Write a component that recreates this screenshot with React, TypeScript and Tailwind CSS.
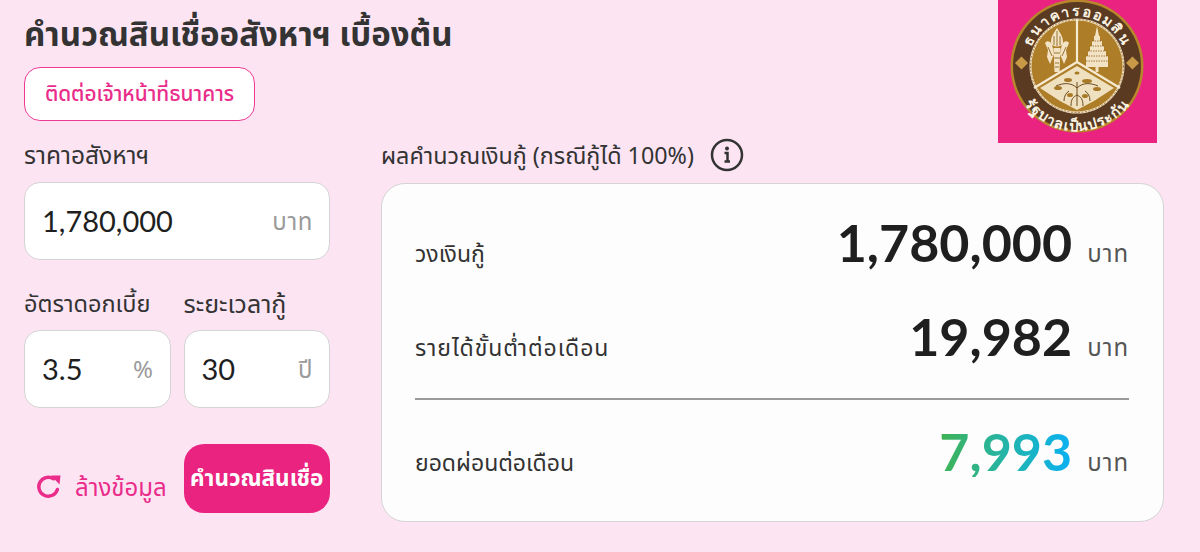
import React from 'react';

const numberFont = { fontFamily: 'Lato, "Noto Sans", sans-serif' };

function BankLogo() {
  return (
    <svg viewBox="0 0 159 143" className="w-full h-full block">
      <rect width="159" height="143" fill="#e9237f" />
      <circle cx="79" cy="66" r="66.5" fill="#b8862c" />
      <circle cx="79" cy="66" r="64" fill="#5a3b22" />
      <circle cx="79" cy="66" r="47.5" fill="#f3e3c4" />
      <circle cx="79" cy="66" r="45.5" fill="#ad7d27" />
      <circle cx="79" cy="66" r="46.5" fill="none" stroke="#8f6a2e" strokeWidth="0.8" strokeDasharray="2 1.5" />
      {/* three way split */}
      <path d="M79 19V62M79 62L36 88M79 62L122 88" stroke="#f6ead2" strokeWidth="2.2" fill="none" />
      {/* tree panel */}
      <path d="M79 66L42 88L62 101L79 110L96 101L116 88Z" fill="#efe0bf" />
      <g fill="#a87a28">
        <ellipse cx="70" cy="80" rx="4" ry="2" />
        <ellipse cx="89" cy="81" rx="5" ry="2" />
        <ellipse cx="60" cy="88" rx="4" ry="2" />
        <ellipse cx="99" cy="89" rx="4" ry="2" />
        <ellipse cx="72" cy="95" rx="3" ry="2" />
        <ellipse cx="87" cy="96" rx="3" ry="2" />
        <ellipse cx="79" cy="73" rx="2.500" ry="1.500" />
      </g>
      <g fill="none" stroke="#6d4c1d" strokeWidth="1">
        <path d="M79 106V82M79 88C73 82 65 83 58 86M79 88C85 82 93 83 100 86M73 106C73 99 75 97 79 95C83 97 85 99 85 106M66 101C66 96 68 93 71 91M92 101C92 96 90 93 87 91" />
      </g>
      {/* deity */}
      <g fill="#f3e3c4">
        <path d="M59 28C56 33 53 36 53 42C53 48 65 48 65 42C65 36 62 33 59 28Z" />
        <path d="M47 43C49 40 52 41 54 44L56 54L52 64L49 57L50 50ZM71 43C69 40 66 41 64 44L62 54L66 64L69 57L68 50Z" />
        <path d="M55.500 48H62.500L61.500 72H56.500Z" />
      </g>
      <g stroke="#8d6420" strokeWidth="0.9" fill="none">
        <path d="M59 31V46M56 36V45M62 36V45M56 53H62M56 58H62M57 63H61M57 67H61M50 47L54 56M68 47L64 56" />
      </g>
      {/* pagoda */}
      <g fill="#f3e3c4">
        <path d="M99 26L101 36H97Z" />
        <rect x="96" y="36" width="6" height="5" />
        <rect x="94" y="41" width="10" height="5" />
        <rect x="92" y="46" width="14" height="5" />
        <rect x="90" y="51" width="18" height="5" />
        <rect x="88" y="56" width="22" height="11" />
        <rect x="97.500" y="67" width="3" height="5" />
      </g>
      <g stroke="#8d6420" strokeWidth="0.8" strokeDasharray="1.5 1">
        <path d="M94 41H104M92 46H106M90 51H108M88 56H110M88 61H110" />
      </g>
      <path d="M17 63L23.500 56.500L30 63L23.500 69.500Z" fill="#c89a48" />
      <path d="M128 63L134.500 56.500L141 63L134.500 69.500Z" fill="#c89a48" />
      <defs>
        <path id="logoTop" d="M30 72.500A49.500 49.500 0 1 1 128 72.500" />
        <path id="logoBottom" d="M15.500 80A65 65 0 0 0 142.500 80" />
      </defs>
      <text fill="#fbf3e2" fontSize="14" fontWeight="700" letterSpacing="2" style={{ fontFamily: '"Noto Sans", sans-serif' }}>
        <textPath href="#logoTop" startOffset="50%" textAnchor="middle">ธนาคารออมสิน</textPath>
      </text>
      <text fill="#fbf3e2" fontSize="14.500" fontWeight="700" letterSpacing="1" style={{ fontFamily: '"Noto Sans", sans-serif' }}>
        <textPath href="#logoBottom" startOffset="50%" textAnchor="middle">รัฐบาลเป็นประกัน</textPath>
      </text>
    </svg>
  );
}

function ResetIcon() {
  return (
    <svg width="28" height="28" viewBox="0 0 28 28" fill="none">
      <path d="M22.400 16.500A9.500 9.500 0 1 1 18.500 5.800" stroke="#ea2c8a" strokeWidth="3.400" strokeLinecap="round" />
      <path d="M16 2.500L25.500 2.500L24.500 11.500Z" fill="#ea2c8a" />
    </svg>
  );
}

function InfoIcon() {
  return (
    <svg width="34" height="34" viewBox="0 0 34 34" fill="none">
      <circle cx="17" cy="17" r="15" stroke="#333333" strokeWidth="2.500" />
      <circle cx="17" cy="10.500" r="2" fill="#333333" />
      <path d="M14.500 15H17.500V23M14.500 23.500H20" stroke="#333333" strokeWidth="2.500" />
    </svg>
  );
}

function InputBox({ value, unit, className }: { value: string; unit: string; className?: string }) {
  return (
    <div className={`h-[78px] bg-white border border-[#d4d4d4] rounded-[16px] flex items-center justify-between pl-[17px] pr-[16px] ${className ?? ''}`}>
      <span className="text-[29px] text-[#1f1f1f]" style={numberFont}>{value}</span>
      <span className="text-[24px] tracking-[0.6px] text-[#9a9a9a]">{unit}</span>
    </div>
  );
}

function ResultRow({ label, value, gradient, className, labelClass }: { label: string; value: string; gradient?: boolean; className?: string; labelClass?: string }) {
  return (
    <div className={`flex items-baseline justify-between ${className ?? ''}`}>
      <span className={`text-[23px] leading-none text-[#333333] ${labelClass ?? ''}`}>{label}</span>
      <div className="flex items-baseline gap-[15px]">
        <span
          style={numberFont}
          className={
            gradient
              ? 'text-[52px] leading-none font-bold bg-gradient-to-r from-[#3fb24f] to-[#0cb0f2] bg-clip-text text-transparent'
              : 'text-[52px] leading-none font-bold text-[#1f1f1f]'
          }
        >
          {value}
        </span>
        <span className="text-[24px] leading-none tracking-[1px] text-[#555555]">บาท</span>
      </div>
    </div>
  );
}

export default function App() {
  return (
    <div
      className="relative w-[1200px] h-[552px] bg-[#fce4f3] overflow-hidden pl-[24px]"
      style={{ fontFamily: '"Noto Sans", "Noto Sans Thai", sans-serif' }}
    >
      <div className="absolute top-0 left-[998px] w-[159px] h-[143px]">
        <BankLogo />
      </div>

      <h1 className="text-[33px] leading-[40px] font-bold text-[#333333] pt-[14px]">คำนวณสินเชื่ออสังหาฯ เบื้องต้น</h1>
      <button className="mt-[13px] w-[231px] h-[54px] bg-white border border-[#ee3a94] rounded-[16px] text-[#ea2c8a] text-[20.800px] font-medium">
        ติดต่อเจ้าหน้าที่ธนาคาร
      </button>

      <div className="flex gap-[51px] mt-[12px]">
        <div className="w-[306px]">
          <div className="text-[24.500px] leading-[44px] text-[#333333]">ราคาอสังหาฯ</div>
          <InputBox value="1,780,000" unit="บาท" className="mt-[5px]" />
          <div className="grid grid-cols-2 gap-[13px] mt-[21px]">
            <div>
              <div className="text-[23.500px] leading-[44px] text-[#333333] whitespace-nowrap">อัตราดอกเบี้ย</div>
              <InputBox value="3.5" unit="%" className="mt-[5px]" />
            </div>
            <div>
              <div className="text-[25px] leading-[44px] text-[#333333] whitespace-nowrap">ระยะเวลากู้</div>
              <InputBox value="30" unit="ปี" className="mt-[5px]" />
            </div>
          </div>
          <div className="grid grid-cols-2 gap-[13px] mt-[36px]">
            <div className="flex items-center gap-[12px] pl-[11px] text-[#ea2c8a] text-[24px] pt-[16px] whitespace-nowrap">
              <ResetIcon />
              <span>ล้างข้อมูล</span>
            </div>
            <button className="h-[69px] bg-[#e9237f] rounded-[20px] text-white text-[22.500px] font-bold whitespace-nowrap pb-[2px]">
              คำนวณสินเชื่อ
            </button>
          </div>
        </div>

        <div className="w-[783px]">
          <div className="flex items-center gap-[16px] h-[44px]">
            <span className="text-[23.300px] text-[#333333] whitespace-nowrap">ผลคำนวณเงินกู้ (กรณีกู้ได้ 100%)</span>
            <InfoIcon />
          </div>
          <div className="mt-[6px] h-[339px] bg-[#fdfdfd] border border-[#d4d4d4] rounded-[24px] pl-[33px] pr-[34px] pt-[32px]">
            <ResultRow label="วงเงินกู้" value="1,780,000" />
            <ResultRow label="รายได้ขั้นต่ำต่อเดือน" value="19,982" className="mt-[42px]" labelClass="tracking-[0.900px]" />
            <div className="border-t-2 border-[#9a9a9a] mt-[36px]" />
            <ResultRow label="ยอดผ่อนต่อเดือน" value="7,993" gradient className="mt-[25px]" />
          </div>
        </div>
      </div>
    </div>
  );
}
